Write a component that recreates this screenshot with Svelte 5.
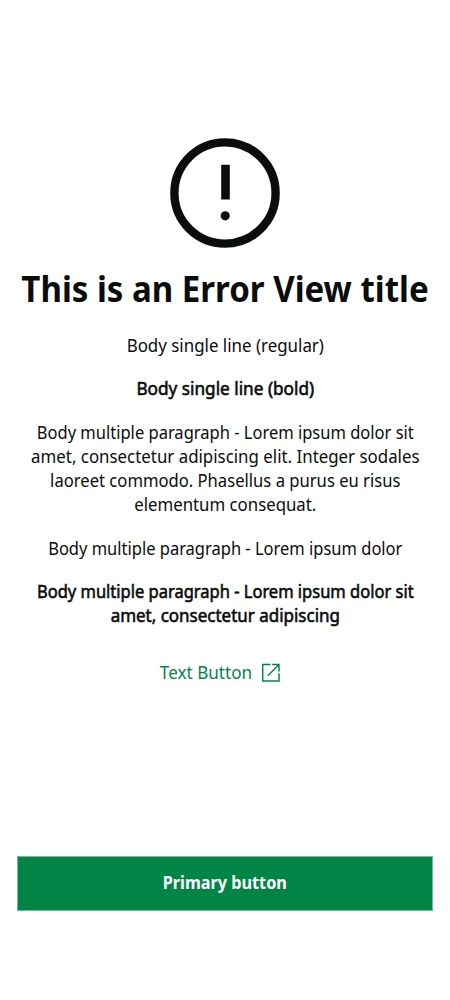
<script>
  const paragraphs = [
    { lines: [['Body single line (regular)', 0.939]] },
    { bold: true, lines: [['Body single line (bold)', 0.955]] },
    {
      lines: [
        ['Body multiple paragraph - Lorem ipsum dolor sit', 0.917],
        ['amet, consectetur adipiscing elit. Integer sodales', 0.937],
        ['laoreet commodo. Phasellus a purus eu risus', 0.923],
        ['elementum consequat.', 0.933]
      ]
    },
    { lines: [['Body multiple paragraph - Lorem ipsum dolor', 0.916]] },
    {
      bold: true,
      lines: [
        ['Body multiple paragraph - Lorem ipsum dolor sit', 0.916],
        ['amet, consectetur adipiscing', 0.943]
      ]
    }
  ];
</script>

<main class="screen">
  <section class="content">
    <svg class="error-icon" viewBox="0 0 110 110" width="110" height="110" aria-hidden="true">
      <circle cx="55" cy="55" r="50.6" fill="none" stroke="#0b0c0c" stroke-width="8.4" />
      <path d="M51.2 26.7h8.6v34.9h-8.6z" fill="#0b0c0c" />
      <circle cx="55.2" cy="77.8" r="4.6" fill="#0b0c0c" />
    </svg>
    <h1>This is an Error View title</h1>
    <div class="body">
      {#each paragraphs as p}
        <p class:bold={p.bold}>
          {#each p.lines as [text, scale]}
            <span style:transform="scaleX({scale})">{text}</span>
          {/each}
        </p>
      {/each}
    </div>
    <button class="text-button">
      <span>Text Button</span>
      <svg viewBox="0 0 20 20" width="20" height="20" aria-hidden="true">
        <path d="M9.5 1.6H1.7v16.3h16.3v-7.6M11.1 1.6h6.9v7M17.8 1.8 6.8 12.8" fill="none" stroke="currentColor" stroke-width="1.5" />
      </svg>
    </button>
  </section>
  <button class="primary"><span>Primary button</span></button>
</main>

<style>
  :global(body) { background: #fff; }
  .screen {
    box-sizing: border-box;
    width: 450px;
    height: 1000px;
    padding: 138px 17px 89px;
    display: flex;
    flex-direction: column;
    justify-content: space-between;
    overflow: hidden;
    color: #0b0c0c;
    font-family: "Noto Sans", sans-serif;
  }
  .content { display: flex; flex-direction: column; align-items: center; }
  .error-icon { display: block; }
  h1 {
    margin: 16px 0 0;
    font-size: 36.5px;
    line-height: 48px;
    font-weight: 700;
    white-space: nowrap;
    transform: scaleX(0.905);
  }
  .body { margin-top: 21px; display: flex; flex-direction: column; gap: 19.4px; }
  p { margin: 0; font-size: 18px; line-height: 24.1px; text-align: center; }
  p span { display: block; white-space: nowrap; }
  .bold { -webkit-text-stroke: 0.6px #0b0c0c; }
  button { border: 0; padding: 0; font-family: inherit; font-size: 18px; }
  .text-button {
    display: flex;
    align-items: center;
    gap: 8.5px;
    margin: 33px 14px 0 0;
    background: none;
    color: #00854a;
    line-height: 24px;
  }
  .text-button span { transform: scaleX(0.95); transform-origin: right; }
  .text-button svg { margin-top: 1px; }
  .primary {
    box-sizing: border-box;
    height: 55px;
    flex-shrink: 0;
    padding-bottom: 3px;
    border: 1px solid rgba(0, 133, 71, 0.55);
    background: #008547;
    background-clip: padding-box;
    color: #fff;
    font-weight: 700;
    line-height: 24px;
  }
  .primary span { display: inline-block; transform: scaleX(0.902); }
</style>
